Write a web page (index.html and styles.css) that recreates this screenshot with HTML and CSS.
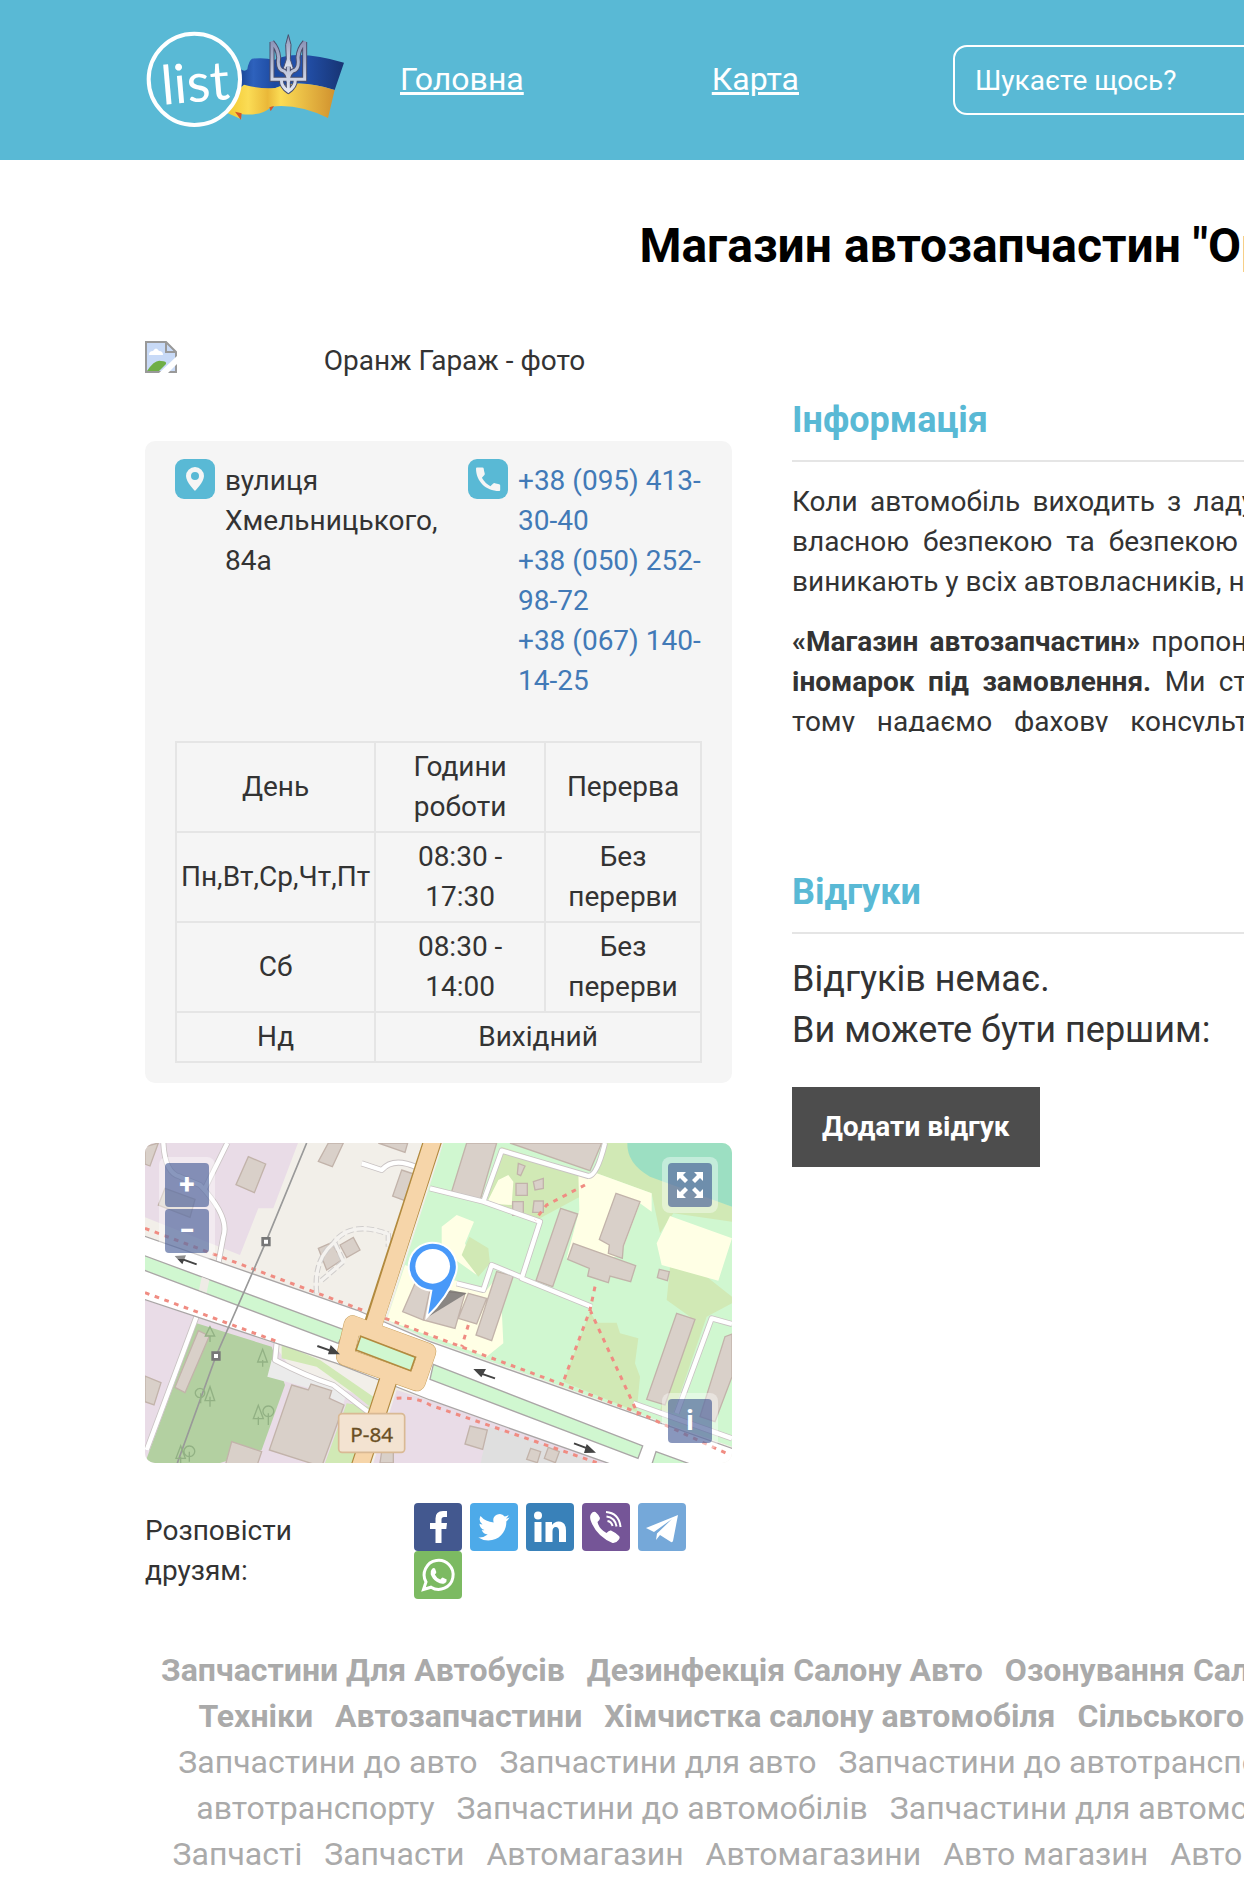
FILE: index.html
```html
<!DOCTYPE html>
<html lang="uk">
<head>
<meta charset="utf-8">
<meta name="viewport" content="width=device-width, initial-scale=1">
<title>Магазин автозапчастин "Оранж Гараж"</title>
<link rel="stylesheet" href="styles.css">
</head>
<body>
<header class="header">
  <div class="container header-row">
    <a class="logo" href="#" aria-label="list">
      <svg viewBox="75 90 600 300" width="200" height="100">
        <defs>
          <linearGradient id="blue" x1="0" x2="1"><stop offset="0" stop-color="#17428f"/><stop offset=".15" stop-color="#2e62bd"/><stop offset=".35" stop-color="#1c49a0"/><stop offset=".6" stop-color="#2352ae"/><stop offset="1" stop-color="#173473"/></linearGradient>
          <linearGradient id="gold" x1="0" x2="1"><stop offset="0" stop-color="#f2c830"/><stop offset=".2" stop-color="#fbdc55"/><stop offset=".38" stop-color="#eab838"/><stop offset=".5" stop-color="#fbdc55"/><stop offset="1" stop-color="#d1922f"/></linearGradient>
          <linearGradient id="steel" x1="0" y1="0" x2="0" y2="1"><stop offset="0" stop-color="#8b94b8"/><stop offset="1" stop-color="#e4e8f2"/></linearGradient>
        </defs>
        <path fill="url(#blue)" d="M362 208q12 8 20 0q4-26 14-32q40-4 66 4q70-34 210 8l-28 82q-110-36-178-6q-50 8-94-8l-20 10z"/>
        <path fill="url(#gold)" d="M364 262l8-8q50 14 94 10q70-30 178 6l-20 84q-90-44-170-34q-30 30-92 22l2 16q-20-10-44-20q32-40 44-76z"/>
        <path fill="#d4552a" d="M345 335l20 5l-2 20zM448 322l14-4l-10 16z"/>
        <g fill="url(#steel)" stroke="#4a4f6d" stroke-width="3">
          <path d="M505 104l8 30l-2 44l10 30h-32l10-30l-2-44z"/>
          <path fill="none" stroke="#4a4f6d" stroke-width="15" d="M456 126v112h98v-112M456 126q18 20 20 46q-4 30 8 38q20 4 22 36M554 126q-18 20-20 46q4 30-8 38q-20 4-22 36M484 240q0 20 21 34q21-14 21-34M505 200v74"/>
          <path fill="none" stroke="url(#steel)" stroke-width="9" d="M456 124v114h98v-114M456 126q18 20 20 46q-4 30 8 38q20 4 22 36M554 126q-18 20-20 46q4 30-8 38q-20 4-22 36M484 240q0 20 21 34q21-14 21-34M505 200v74"/>
        </g>
        <circle cx="223" cy="238" r="137" fill="#59b9d5" stroke="#fff" stroke-width="12"/>
        <text class="logo-text" x="128" y="314" transform="rotate(-5 128 314)">list</text>
      </svg>
    </a>
    <nav class="nav">
      <a href="#">Головна</a>
      <a href="#">Карта</a>
    </nav>
    <input class="search" type="search" aria-label="Пошук" placeholder="Шукаєте щось?">
  </div>
</header>

<main class="container">
  <h1 class="title">Магазин автозапчастин "Оранж Гараж"</h1>
  <div class="columns">
    <aside class="side">
      <figure class="photo">
        <svg viewBox="0 0 32 32" width="32" height="32" aria-hidden="true">
          <path fill="#c8daf7" d="M1 1h20l10 10v20H1z"/>
          <path fill="#fff" d="M4 14q0-4 4-4q3-5 6 0q4 0 4 4z"/>
          <path fill="#6fae46" d="M2 30q8-12 14-10q6 0 5 3l-7 7z"/>
          <path fill="none" stroke="#999" stroke-width="2" d="M1 31V1h20l10 10v20zM21 1v10h10"/>
          <path fill="#fff" d="M14 32L32 15v8l-9 9z"/>
        </svg>
        <figcaption>Оранж Гараж - фото</figcaption>
      </figure>

      <section class="card">
        <div class="contacts">
          <div class="contact address">
            <svg class="contact-icon" viewBox="0 0 40 40"><rect width="40" height="40" rx="9"/><path d="M20 8a9 9 0 0 0-9 9c0 6 9 15 9 15s9-9 9-15a9 9 0 0 0-9-9zm0 13a4 4 0 1 1 0-8a4 4 0 0 1 0 8z"/></svg>
            <address>вулиця Хмельницького, 84а</address>
          </div>
          <div class="contact">
            <svg class="contact-icon" viewBox="0 0 40 40"><rect width="40" height="40" rx="9"/><path d="M9 8.500h5.500q1 0 1.200 1q.3 2.800 1 4.700q.3 1-.3 1.700l-2.500 2.800q3 5.500 8.500 8.500l2.800-2.700q.8-.6 1.700-.3q2 .7 4.300 1q1 .2 1 1.200V31q0 1-1 1C17.500 32 8 22 8 9.500q0-1 1-1z"/></svg>
            <div class="phones">
              <a href="tel:+380954133040">+38 (095) 413-30-40</a>
              <a href="tel:+380502529872">+38 (050) 252-98-72</a>
              <a href="tel:+380671401425">+38 (067) 140-14-25</a>
            </div>
          </div>
        </div>
        <table class="hours">
          <thead>
            <tr><th class="day">День</th><th class="time">Години роботи</th><th>Перерва</th></tr>
          </thead>
          <tbody>
            <tr><td>Пн,Вт,Ср,Чт,Пт</td><td>08:30 - 17:30</td><td>Без перерви</td></tr>
            <tr><td>Сб</td><td>08:30 - 14:00</td><td>Без перерви</td></tr>
            <tr><td>Нд</td><td colspan="2">Вихідний</td></tr>
          </tbody>
        </table>
      </section>

      <div class="map">
        <svg class="map-canvas" viewBox="15 39 1761 960" preserveAspectRatio="xMidYMid slice">
          <rect x="15" y="39" width="1761" height="960" fill="#f2efe9"/>
          <!-- land use -->
          <g>
            <path fill="#e9dce7" d="M15 39H474L400 235H355L300 375L15 262z"/>
            <path fill="#e9dce7" d="M15 505L400 640L470 740L370 999H15zM360 999L470 730L700 810L640 999zM770 780L1776 1100V999H700z"/>
            <path fill="#d0f7d0" d="M910 39H1776V950L870 630L740 570z"/>
            <path fill="#ffffe5" d="M795 405L880 440L940 450L1040 480L1080 430L1090 640L1040 680L740 570z"/>
            <path fill="#b3d0a1" d="M170 580L395 650L435 765L365 960L240 999H15z"/>
            <path fill="#d1e9b5" d="M425 642L540 690L700 800L690 830L640 790L530 710L425 685zM620 820L690 830L640 999H555z"/>
            <path fill="#ebebeb" d="M395 690L510 740L620 790L610 822L510 775L382 740z"/>
            <path fill="#dfdfdf" d="M1045 890L1380 1000H1022z"/>
            <path fill="#d1e9b5" d="M1085 50L1360 140L1320 200L1190 270L1040 220zM1390 39H1500L1530 130L1776 230V275L1600 250L1560 310L1535 190L1370 130zM1590 410L1700 440L1776 500V520L1700 560L1600 850L1560 840L1650 560L1580 510zM1350 545L1370 578H1430L1440 610L1495 625L1485 700L1500 740L1490 845L1270 755z"/>
            <path fill="#9cdfc2" d="M1462 39H1776V230L1530 140Q1460 100 1462 39z"/>
            <path fill="#ffffe5" d="M1040 220L1075 150L1105 135L1120 155L1115 225zM1315 130L1370 130L1535 190V245L1500 220L1440 380L1280 385L1318 240zM1590 258L1776 325L1735 452L1565 405L1550 340zM905 290L950 255L1002 275L975 340L1010 435L905 360z"/>
            <path fill="#d1e9b5" d="M988 320L1045 355L1050 400L1015 440L965 375z"/>
          </g>
          <!-- buildings -->
          <g fill="#d9d0c9" stroke="#c2b3aa" stroke-width="4">
            <path d="M325 80L377 102L343 188L288 164zM15 50L55 39L30 108L15 102zM75 175L165 208L150 262L55 225zM565 39H610L577 110L535 94zM715 39L795 67L803 39zM785 120L830 135L795 212L758 198zM535 355L575 338L605 390L560 420zM600 345L640 322L660 360L620 383zM175 602L208 618L135 788L105 772zM15 738L63 758L42 825L15 815z"/>
            <path d="M455 765L505 780L513 762L575 782L568 805L612 825L545 1010L388 960zM275 935L365 965L350 1010H255z"/>
            <path d="M825 460L870 480L850 570L788 545zM870 480L975 490L945 595L850 570zM985 490L1040 505L1010 582L955 565zM1070 425L1120 438L1055 632L1008 615zM980 39H1070L1020 212L935 185zM1110 39H1385L1350 122zM1262 235L1313 252L1238 470L1188 452zM1428 190L1500 215L1450 348L1447 385L1405 370L1408 345L1378 328zM1300 340L1487 407L1472 455L1410 438L1405 458L1343 438L1348 415L1283 388zM1558 418L1588 425L1582 452L1552 443zM1610 550L1665 568L1575 825L1520 808zM1776 612L1755 620L1680 860L1725 875L1776 740zM1128 160H1162V196H1128zM1118 215H1150V256H1118zM1182 213H1210V247H1178zM1180 155L1210 145V175L1185 180zM1135 100L1155 108L1142 137L1132 132zM990 888L1042 900L1028 958L975 942zM1172 955L1202 965L1192 998L1160 988zM1225 952L1258 965L1246 998L1213 985zM725 965H760V999H720z"/>
          </g>
          <!-- minor roads -->
          <path fill="none" stroke="#c9c3c3" stroke-width="18" stroke-linejoin="round" d="M70 39Q75 130 120 140L180 165Q270 260 250 320L235 400M262 39L195 175M175 545L20 960M410 640L405 690Q500 740 580 765L690 850M665 100L725 120Q760 80 830 112M870 175L1030 215L1085 62L1345 138Q1370 140 1395 39M1030 215L1200 275L1145 445L1355 530M1140 440L1055 405L1030 480L950 460M1480 820L1776 925M1610 850L1715 565L1776 582"/>
          <path fill="none" stroke="#fff" stroke-width="13" stroke-linejoin="round" d="M70 39Q75 130 120 140L180 165Q270 260 250 320L235 400M262 39L195 175M175 545L20 960M410 640L405 690Q500 740 580 765L690 850M665 100L725 120Q760 80 830 112M870 175L1030 215L1085 62L1345 138Q1370 140 1395 39M1030 215L1200 275L1145 445L1355 530M1140 440L1055 405L1030 480L950 460M1480 820L1776 925M1610 850L1715 565L1776 582"/>
          <path fill="none" stroke="#cfcccb" stroke-width="16" stroke-dasharray="22 9" d="M530 490Q520 390 580 340Q630 270 745 312M585 340L610 395L540 455M745 310V350"/>
          <path fill="none" stroke="#f4f2ef" stroke-width="10" d="M530 490Q520 390 580 340Q630 270 745 312M585 340L610 395L540 455M745 310V350"/>
          <!-- avenue -->
          <path fill="#fff" stroke="#aaa6a6" stroke-width="4" d="M0 314L650 540L870 635L1790 960V1140L1400 998L870 810L590 700L0 504z"/>
          <path fill="#d0f7d0" stroke="#aaa6a6" stroke-width="4" d="M0 372L615 600L595 640L0 416zM880 703L1508 948L1494 985L870 748zM1548 965L1700 1020H1530z"/>
          <path fill="#efebe6" d="M185 441L208 450L200 488L177 480z"/>
          <path fill="none" stroke="#f08c82" stroke-width="9" stroke-dasharray="14 17" d="M15 295L680 545M735 565L1500 850L1770 975M15 488L415 636M770 805Q830 800 870 825L1370 998M1335 165L1220 225L1185 270M1365 470L1350 540L1270 755M1350 540L1495 855M985 585L965 650"/>
          <!-- power line -->
          <path fill="none" stroke="#999" stroke-width="5" d="M500 39L378 335L228 678L112 999"/>
          <path fill="#fff" stroke="#777" stroke-width="8" d="M368 325h20v20h-20zM218 668h20v20h-20z"/>
          <path fill="none" stroke="#92b184" stroke-width="4" d="M210 770L195 812H224zM210 800v30M180 775a14 14 0 1 0 .1 0M182 790v30M355 826L340 866H370zM355 860v25M385 828a16 16 0 1 0 .1 0M385 850v35M368 658L353 696H382zM368 690v20M148 948a16 16 0 1 0 .1 0M148 965v30M122 948L108 985H136zM122 980v19M210 590L196 618H224zM210 618v18"/>
          <!-- trunk road -->
          <g fill="none" stroke-linejoin="round">
            <path stroke="#b28a3e" stroke-width="56" d="M882 20L700 580M748 740L660 1010"/>
            <path stroke="#c59f5c" stroke-width="54" d="M638 583L862 665L830 757L615 680z"/>
            <path stroke="#f6d5a9" stroke-width="49" d="M882 20L700 590M748 740L660 1010"/>
            <path stroke="#f6d5a9" stroke-width="51" d="M638 583L862 665L830 757L615 680z"/>
          </g>
          <path fill="#d0f7d0" stroke="#b28a3e" stroke-width="5" d="M662 619L826 682L812 722L648 660z"/>
          <g fill="#444" stroke="#444" stroke-width="6">
            <path d="M170 403L120 385M532 648L580 665M1065 745L1015 728M1302 940L1350 958"/>
            <path stroke="none" d="M104 378L138 376L127 403zM600 673L572 645L564 673zM1000 717L1038 717L1024 742zM1368 968L1340 942L1332 969z"/>
          </g>
          <rect x="596" y="851" width="198" height="116" rx="10" fill="#f3e3d1" stroke="#d9b994" stroke-width="5"/>
          <text class="map-road" x="695" y="935" text-anchor="middle">P-84</text>
          <!-- marker -->
          <path fill="#555" opacity=".6" d="M865 560L930 480L980 490z"/>
          <path fill="#4899f9" stroke="#fff" stroke-width="6" d="M860 562L874 482A72 72 0 1 1 945 437Q925 500 860 562z"/>
          <circle cx="878" cy="409" r="52" fill="#fff"/>
        </svg>
        <div class="map-control zoom">
          <button type="button" aria-label="Збільшити">+</button>
          <button type="button" aria-label="Зменшити">−</button>
        </div>
        <div class="map-control fullscreen">
          <button type="button" aria-label="На весь екран">
            <svg viewBox="0 0 28 28" width="28" height="28"><path fill="#fff" d="M1 1h9L7 4l5 5l-3 3l-5-5l-3 3zM27 1v9l-3-3l-5 5l-3-3l5-5l-3-3zM1 27v-9l3 3l5-5l3 3l-5 5l3 3zM27 27h-9l3-3l-5-5l3-3l5 5l3-3z"/></svg>
          </button>
        </div>
        <div class="map-control info">
          <button type="button" aria-label="Про мапу">i</button>
        </div>
      </div>

      <div class="share">
        <p>Розповісти друзям:</p>
        <ul>
          <li><a class="facebook" href="#" aria-label="Facebook"><svg viewBox="0 0 48 48"><path d="M21.500 40V26H16v-6h5.500v-4.500q0-7.500 7.500-7.500h4v6h-3q-2.500 0-2.500 2.500V20H33l-.7 6h-4.800v14z"/></svg></a></li>
          <li><a class="twitter" href="#" aria-label="Twitter"><svg viewBox="0 0 48 48"><path d="M39.500 14.500q-1.600.8-3.600 1q2-1.300 2.800-3.500q-2 1.200-4 1.600a6.300 6.300 0 0 0-11 5.800Q15.500 19 10.500 13q-2.500 5 2 8.500q-1.600 0-3-.8q.2 5 5 6.300q-1.400.4-2.800.1q1.500 4 6 4.500q-4 3.300-9.400 2.800q4.500 3 10 3c12 0 18.500-10 18-19q1.900-1.500 3.200-3.900z"/></svg></a></li>
          <li><a class="linkedin" href="#" aria-label="LinkedIn"><svg viewBox="0 0 48 48"><circle cx="12" cy="12.500" r="4"/><path d="M8.500 19h7v20h-7zM19.500 19H26v3q2.500-3.500 6.500-3.500q7.500 0 7.500 9V39h-7V28.500q0-4.500-3.200-4.500q-3.300 0-3.300 4.500V39h-7z"/></svg></a></li>
          <li><a class="viber" href="#" aria-label="Viber"><svg viewBox="0 0 48 48"><path d="M9 11q2-3 4.500-2q3 2.500 4.500 6q0 2-2.500 4q1.500 7 9 11q2.500-3 4.500-2.500q4.500 2 8 5.500q1.500 1.500-.5 4q-2.500 3.500-6 3Q14 33 8.500 17q-1-4 .5-6z"/><path class="waves" d="M24 9q13 1 14.500 15M24.500 13.500q8.500 1 10 10M25.500 18q4 .5 5 5"/></svg></a></li>
          <li><a class="telegram" href="#" aria-label="Telegram"><svg viewBox="0 0 48 48"><path d="M40 12L8 25l8 4l18-13L19 30.500L18 37l4-5l11 7q1.500.5 2-1z"/></svg></a></li>
          <li><a class="whatsapp" href="#" aria-label="WhatsApp"><svg viewBox="0 0 48 48"><path class="bubble" d="M9.500 38.500l2.500-7.500a14.500 14.500 0 1 1 5 5.200z"/><path d="M18 18q1.500-1.800 3-.5l1.300 3.500q.2 1-1.500 2.500q1.700 3.500 5.500 5q1.700-2 2.400-2l4 2q.3 2.500-2 3.700q-3 1.800-8-1.500q-4.500-3-6-7.500q-.7-3.200 1.300-5.200z"/></svg></a></li>
        </ul>
      </div>
    </aside>

    <div class="content">
      <section>
        <h2>Інформація</h2>
        <div class="about">
          <p>
            <span class="line">Коли автомобіль виходить з ладу, водій починає хвилюватися не лише через нього, а за</span>
            <span class="line">власною безпекою та безпекою пасажирів стежить кожен свідомий водій. Такі питання</span>
            виникають у всіх автовласників, незалежно від марки авто.
          </p>
          <p>
            <span class="line"><b>«Магазин автозапчастин»</b> пропонує найширший асортимент запасних частин та <b>деталі до</b></span>
            <span class="line"><b>іномарок під замовлення.</b> Ми стараємося знайти підхід до кожного нашого відвідувача,</span>
            <span class="line">тому надаємо фахову консультацію та допомагаємо підібрати необхідні деталі для</span>
            вашого автомобіля.
          </p>
        </div>
      </section>
      <section class="reviews">
        <h2>Відгуки</h2>
        <p>Відгуків немає.<br>Ви можете бути першим:</p>
        <button class="add-review" type="button">Додати відгук</button>
      </section>
    </div>
  </div>

  <nav class="tags">
    <div class="tag-row strong"><a href="#">Запчастини Для Автобусів</a><a href="#">Дезинфекція Салону Авто</a><a href="#">Озонування Салону Авто</a><a href="#">Запчастини Для Сільськогосподарської</a></div>
    <div class="tag-row strong"><a href="#">Техніки</a><a href="#">Автозапчастини</a><a href="#">Хімчистка салону автомобіля</a><a href="#">Сільськогосподарські Запчастини</a><a href="#">Автотовари Кременчук</a></div>
    <div class="tag-row"><a href="#">Запчастини до авто</a><a href="#">Запчастини для авто</a><a href="#">Запчастини до автотранспорту</a><a href="#">Запчастини до транспорту</a><a href="#">Запчастини для</a></div>
    <div class="tag-row"><a href="#">автотранспорту</a><a href="#">Запчастини до автомобілів</a><a href="#">Запчастини для автомобілів</a><a href="#">Автомобільні запчастини</a><a href="#">Автозапчастин</a></div>
    <div class="tag-row"><a href="#">Запчасті</a><a href="#">Запчасти</a><a href="#">Автомагазин</a><a href="#">Автомагазини</a><a href="#">Авто магазин</a><a href="#">Авто магазини</a><a href="#">Магазин автозапчастин</a><a href="#">Автозапчасті</a></div>
  </nav>
</main>
</body>
</html>
```
FILE: styles.css
```css
* { box-sizing: border-box; }

body {
  margin: 0;
  overflow-x: hidden;
  background: #fff;
  color: #333;
  font: 28px/40px Roboto, "Liberation Sans", sans-serif;
}

h1, h2, p, ul, figure { margin: 0; }
a { color: #427ab7; text-decoration: none; }
button, input { font: inherit; }

/* Desktop grid keeps its full width on narrow windows */
.container {
  min-width: 2026px;
  padding-left: 145px;
}

.header { background: #59b9d5; }
.header-row {
  display: flex;
  align-items: center;
  height: 160px;
}
.logo { display: flex; margin-right: 55px; }
.logo-text {
  fill: #fff;
  font-family: Lato, sans-serif;
  font-size: 162px;
  font-weight: 400;
}
.nav {
  display: flex;
  gap: 188px;
  margin-right: 154px;
}
.nav a {
  color: #fff;
  font-size: 32px;
  line-height: 42px;
  padding-bottom: 2px;
  text-decoration: underline;
}
.search {
  flex: 1;
  height: 70px;
  padding: 0 20px;
  border: 2px solid #fff;
  border-radius: 14px;
  background: transparent;
  color: #fff;
}
.search::placeholder { color: #fff; opacity: 1; }

.title {
  padding: 52px 0 60px;
  color: #000;
  font-size: 48px;
  line-height: 68px;
  text-align: center;
}

.columns {
  display: grid;
  grid-template-columns: 587px 1fr;
  gap: 60px;
}

.photo { display: flex; padding-top: 1px; }
.photo figcaption { flex: 1; text-align: center; }

.card {
  margin-top: 60px;
  padding: 18px 30px 20px;
  border-radius: 10px;
  background: #f5f5f5;
}
.contacts { display: flex; }
.contact {
  display: flex;
  flex: 1;
  gap: 10px;
}
.contact.address { flex: 0 0 293px; }
.contact-icon {
  flex: none;
  width: 40px;
  height: 40px;
  fill: #f5f5f5;
}
.contact-icon rect { fill: #59b9d5; }
.contact address { padding: 2px 20px 0 0; font-style: normal; }
.phones { padding-top: 2px; }
.phones a { display: block; }

.hours {
  width: 100%;
  margin-top: 40px;
  border-collapse: collapse;
  text-align: center;
}
.hours th, .hours td {
  padding: 4px;
  border: 2px solid #e5e5e5;
  font-weight: 400;
}
.hours .day { width: 199px; }
.hours .time { width: 170px; }

.map {
  position: relative;
  height: 320px;
  margin-top: 60px;
  border-radius: 10px;
  overflow: hidden;
}
.map-canvas { display: block; width: 100%; height: 100%; }
.map-road {
  fill: #6a4f24;
  stroke: #6a4f24;
  font-family: "Noto Sans", sans-serif;
  font-size: 62px;
}
.map-control {
  position: absolute;
  display: grid;
  gap: 2px;
  padding: 6px;
  border-radius: 8px;
  background: rgba(255, 255, 255, .4);
}
.map-control button {
  display: flex;
  align-items: center;
  justify-content: center;
  width: 44px;
  height: 44px;
  padding: 0;
  border: 0;
  border-radius: 4px;
  background: rgba(40, 65, 135, .55);
  color: #fff;
  font-weight: 700;
}
.zoom { top: 14px; left: 14px; }
.fullscreen { top: 14px; right: 14px; }
.info { right: 14px; bottom: 14px; }

.share {
  display: flex;
  justify-content: space-between;
  margin-top: 40px;
}
.share p { width: 200px; padding-top: 8px; }
.share ul {
  display: flex;
  flex-wrap: wrap;
  column-gap: 8px;
  width: 318px;
  padding: 0;
  list-style: none;
}
.share a {
  display: block;
  width: 48px;
  height: 48px;
  border-radius: 4px;
}
.share svg { display: block; fill: #fff; }
.facebook { background: #43588f; }
.twitter { background: #4daae9; }
.linkedin { background: #3981b9; }
.viber { background: #755597; }
.telegram { background: #75a8d9; }
.whatsapp { background: #7cba62; }
.share .waves, .share .bubble { fill: none; stroke: #fff; stroke-width: 2; }
.share .bubble { stroke-width: 3; }

.content { padding-top: 54px; }
.content h2 {
  padding-bottom: 14px;
  border-bottom: 2px solid #e5e5e5;
  color: #59b9d5;
  font-size: 36px;
  line-height: 52px;
}
.about {
  max-height: 270px;
  padding-top: 20px;
  overflow: hidden;
  text-align: justify;
}
.about p { margin-bottom: 20px; }
.line {
  display: block;
  text-align-last: justify;
  white-space: nowrap;
}
.reviews { padding-top: 134px; }
.reviews p {
  padding: 20px 0 31px;
  font-size: 36px;
  line-height: 51px;
}
.add-review {
  height: 80px;
  padding: 0 30px;
  border: 0;
  background: #4d4d4d;
  color: #fff;
  font-weight: 700;
}

.tags {
  margin-top: 48px;
  font-size: 32px;
  line-height: 46px;
}
.tag-row {
  display: flex;
  justify-content: center;
  gap: 22px;
  white-space: nowrap;
}
.tag-row a { color: #aaa; }
.strong { font-weight: 700; }
```
